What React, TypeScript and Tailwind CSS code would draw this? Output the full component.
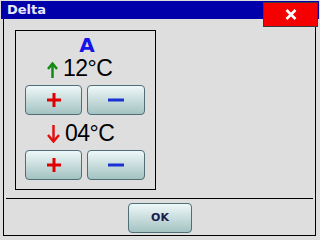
import React from 'react';

const btn =
  'flex items-center justify-center rounded-[4px] border border-[#4f6e76] bg-linear-to-b from-[#eef8f8] to-[#a4c2c2]';

function ArrowUp() {
  return (
    <svg width="11" height="16" viewBox="0 0 11 16" className="block">
      <path d="M5.5 2 V16" stroke="#138a13" strokeWidth="2.5" fill="none" />
      <path d="M1 7 L5.5 1.5 L10 7" stroke="#138a13" strokeWidth="2.5" fill="none" />
    </svg>
  );
}

function ArrowDown() {
  return (
    <svg width="13" height="18" viewBox="0 0 13 18" className="block">
      <path d="M6.5 0 V16" stroke="#e01010" strokeWidth="2.5" fill="none" />
      <path d="M1 10 L6.5 16.5 L12 10" stroke="#e01010" strokeWidth="2.5" fill="none" />
    </svg>
  );
}

function StepButtons() {
  return (
    <div className="flex gap-[5px] ml-[9px] self-start">
      <button className={`${btn} w-[57px] h-[30px]`}>
        <svg width="14" height="14" viewBox="0 0 14 14">
          <path d="M7 0 V14 M0 7 H14" stroke="#e00000" strokeWidth="3" />
        </svg>
      </button>
      <button className={`${btn} w-[58px] h-[30px]`}>
        <svg width="16" height="4" viewBox="0 0 16 4">
          <path d="M0 2 H16" stroke="#1a32d4" strokeWidth="3" />
        </svg>
      </button>
    </div>
  );
}

function TempRow({ up, value }: { up: boolean; value: string }) {
  return (
    <div className="flex items-end self-start ml-[31px] h-[22px]">
      <div className="mb-[2px]">{up ? <ArrowUp /> : <ArrowDown />}</div>
      <span className="ml-[5px] text-[23px] leading-none tracking-[-0.5px] text-black font-['Liberation_Sans',sans-serif]">
        {value}
      </span>
    </div>
  );
}

export default function App() {
  return (
    <div className="relative w-[320px] h-[240px] bg-[#dedede] overflow-hidden font-['DejaVu_Sans',sans-serif]">
      {/* title bar */}
      <div className="pt-[1px] px-[1px]">
        <div className="h-[18px] bg-[#0000aa] pl-[6px] text-[13px] leading-[18px] font-bold text-[#e8e8ff]">
          Delta
        </div>
      </div>

      {/* close button */}
      <button className="absolute left-[263px] top-[2px] w-[55px] h-[25px] bg-[#f40000] border border-[#3a3a3a] flex items-center justify-center">
        <svg width="12" height="11" viewBox="0 0 12 11">
          <path d="M1.5 1 L10.5 10 M10.5 1 L1.5 10" stroke="#fff" strokeWidth="2.6" />
        </svg>
      </button>

      {/* content frame */}
      <div className="ml-[3px] w-[313px] h-[217px] border-x border-b border-black flex flex-col">
        <div className="ml-[11px] mt-[11px] w-[141px] h-[160px] border border-black flex flex-col items-center">
          <div className="mt-[4px] text-[20px] leading-none font-bold text-[#1414e6] pl-[3px]">A</div>
          <div className="mt-[3px] self-start">
            <TempRow up value="12°C" />
          </div>
          <div className="mt-[5px] self-start">
            <StepButtons />
          </div>
          <div className="mt-[8px] self-start">
            <TempRow up={false} value="04°C" />
          </div>
          <div className="mt-[5px] self-start">
            <StepButtons />
          </div>
        </div>

        <div className="mt-[8px] ml-[2px] w-[307px] h-px bg-black" />

        <button
          className={`${btn} mt-[4px] ml-[124px] w-[64px] h-[30px] text-[11px] font-bold text-[#1a1a4a]`}
        >
          OK
        </button>
      </div>
    </div>
  );
}
